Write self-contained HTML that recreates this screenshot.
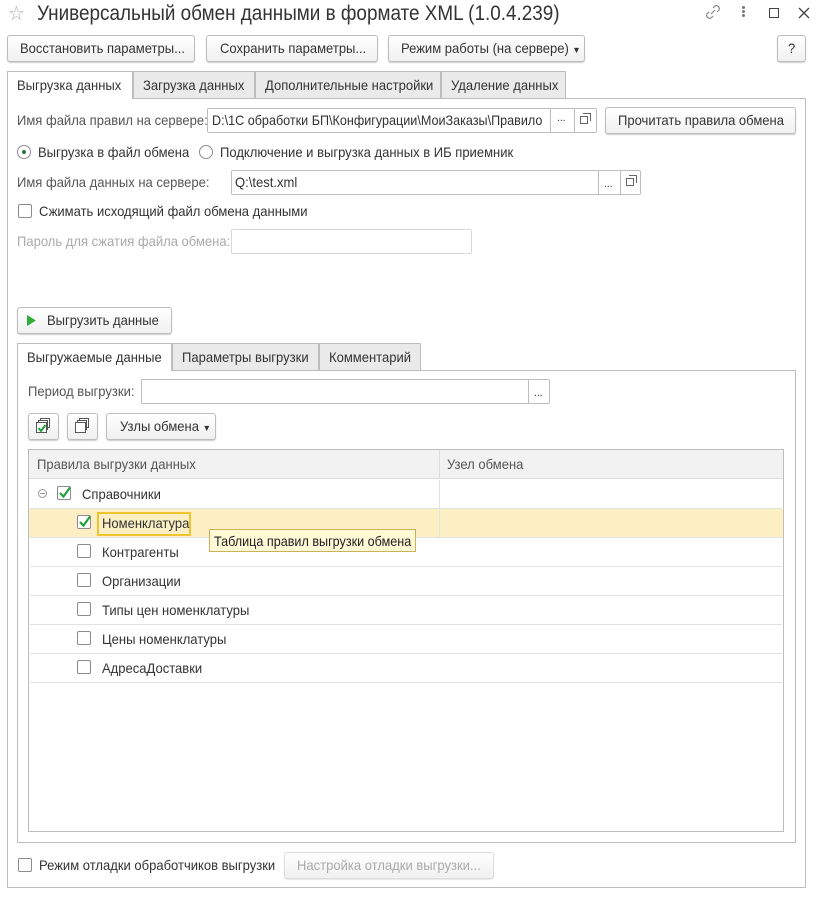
<!DOCTYPE html>
<html><head><meta charset="utf-8"><style>
*{box-sizing:border-box;margin:0;padding:0}
body{width:818px;height:897px;background:#fff;position:relative;overflow:hidden;font-family:"Liberation Sans",Arial,sans-serif;font-size:14px;color:#333}
.a{position:absolute}
.t{position:absolute;white-space:nowrap;transform:scaleX(0.93);transform-origin:left center;line-height:16px}
.btn{position:absolute;border:1px solid #bdbdbd;border-radius:3px;background:linear-gradient(#fff,#f0f0f0);box-shadow:0 1px 1px rgba(0,0,0,.2)}
.inp{position:absolute;border:1px solid #bdbdbd;background:#fff;border-radius:2px}
.tab{position:absolute;border:1px solid #bdbdbd;border-bottom:none;background:#eaeaea}
.cb{position:absolute;width:14px;height:14px;border:1px solid #8c8c8c;border-radius:2px;background:#fff}
.line{position:absolute;height:1px;background:#e2e2e2;left:30px;width:752px}
</style></head><body>
<div class="t" style="left:8px;top:3px;font-size:20px;line-height:22px;color:#aaa">☆</div>
<div class="t" style="left:37px;top:2px;font-size:21px;line-height:24px;color:#333;transform:scaleX(0.9)">Универсальный обмен данными в формате XML (1.0.4.239)</div>
<svg class="a" style="left:703px;top:3px" width="20" height="18" viewBox="0 0 20 18"><path d="M8 11 L12 7 M10 5 l2-2 a3 3 0 0 1 4 4 l-2 2 M10 13 l-2 2 a3 3 0 0 1 -4 -4 l2 -2" fill="none" stroke="#888" stroke-width="1.2"/></svg>
<div class="a" style="left:742px;top:6px;width:3px;height:3px;background:#777;border-radius:2px;box-shadow:0 4px 0 #777,0 8px 0 #777"></div>
<div class="a" style="left:769px;top:8px;width:10px;height:10px;border:1.5px solid #444"></div>
<svg class="a" style="left:797px;top:6px" width="14" height="14"><path d="M2 2L12 12M12 2L2 12" stroke="#444" stroke-width="1.3"/></svg>

<div class="btn" style="left:7px;top:35px;width:188px;height:27px"></div><div class="t" style="left:20px;top:40px">Восстановить параметры...</div>
<div class="btn" style="left:206px;top:35px;width:172px;height:27px"></div><div class="t" style="left:220px;top:40px">Сохранить параметры...</div>
<div class="btn" style="left:388px;top:35px;width:197px;height:27px"></div><div class="t" style="left:401px;top:40px">Режим работы (на сервере) <span style="font-size:9px">▼</span></div>
<div class="btn" style="left:777px;top:35px;width:29px;height:27px"></div><div class="t" style="left:788px;top:40px">?</div>

<div class="a" style="left:7px;top:98px;width:799px;height:790px;border:1px solid #bdbdbd"></div>
<div class="tab" style="left:7px;top:71px;width:126px;height:28px;background:#fff"></div><div class="t" style="left:17px;top:77px">Выгрузка данных</div>
<div class="tab" style="left:133px;top:71px;width:122px;height:27px"></div><div class="t" style="left:143px;top:77px">Загрузка данных</div>
<div class="tab" style="left:255px;top:71px;width:186px;height:27px"></div><div class="t" style="left:265px;top:77px">Дополнительные настройки</div>
<div class="tab" style="left:441px;top:71px;width:125px;height:27px"></div><div class="t" style="left:451px;top:77px">Удаление данных</div>

<div class="t" style="left:17px;top:112px;color:#555">Имя файла правил на сервере:</div>
<div class="inp" style="left:207px;top:108px;width:390px;height:25px"></div>
<div class="t" style="left:212px;top:112px;transform:scaleX(0.9)">D:\1С обработки БП\Конфигурации\МоиЗаказы\Правило</div>
<div class="a" style="left:548px;top:109px;width:48px;height:23px;background:#fff"></div>
<div class="a" style="left:550px;top:108px;width:1px;height:25px;background:#bdbdbd"></div><div class="t" style="left:557px;top:110px;font-size:11px">...</div>
<div class="a" style="left:574px;top:108px;width:1px;height:25px;background:#bdbdbd"></div>
<div class="a" style="left:580px;top:116px;width:8px;height:8px;border:1px solid #666;background:#fff"></div><div class="a" style="left:583px;top:113px;width:8px;height:8px;border:1px solid #666;border-left:none;border-bottom:none"></div>
<div class="btn" style="left:605px;top:107px;width:191px;height:27px"></div><div class="t" style="left:618px;top:112px">Прочитать правила обмена</div>

<div class="a" style="left:17px;top:145px;width:14px;height:14px;border:1px solid #8c8c8c;border-radius:50%"></div><div class="a" style="left:22px;top:150px;width:4px;height:4px;background:#1e7a3c;border-radius:50%"></div>
<div class="t" style="left:38px;top:144px">Выгрузка в файл обмена</div>
<div class="a" style="left:199px;top:145px;width:14px;height:14px;border:1px solid #8c8c8c;border-radius:50%"></div>
<div class="t" style="left:220px;top:144px">Подключение и выгрузка данных в ИБ приемник</div>

<div class="t" style="left:17px;top:174px;color:#555">Имя файла данных на сервере:</div>
<div class="inp" style="left:231px;top:170px;width:410px;height:25px"></div>
<div class="t" style="left:235px;top:174px">Q:\test.xml</div>
<div class="a" style="left:598px;top:170px;width:1px;height:25px;background:#bdbdbd"></div><div class="t" style="left:604px;top:176px;font-size:11px">...</div>
<div class="a" style="left:620px;top:170px;width:1px;height:25px;background:#bdbdbd"></div>
<div class="a" style="left:626px;top:178px;width:8px;height:8px;border:1px solid #666;background:#fff"></div><div class="a" style="left:629px;top:175px;width:8px;height:8px;border:1px solid #666;border-left:none;border-bottom:none"></div>

<div class="cb" style="left:18px;top:204px"></div><div class="t" style="left:39px;top:203px">Сжимать исходящий файл обмена данными</div>
<div class="t" style="left:17px;top:233px;color:#aaa">Пароль для сжатия файла обмена:</div>
<div class="inp" style="left:231px;top:229px;width:241px;height:25px;border-color:#d8d8d8"></div>

<div class="btn" style="left:17px;top:307px;width:155px;height:27px"></div>
<svg class="a" style="left:27px;top:315px" width="10" height="11"><path d="M0 0L9 5.5L0 11Z" fill="#2fae3a"/></svg>
<div class="t" style="left:47px;top:312px">Выгрузить данные</div>

<div class="a" style="left:17px;top:370px;width:779px;height:473px;border:1px solid #bdbdbd"></div>
<div class="tab" style="left:17px;top:343px;width:155px;height:28px;background:#fff"></div><div class="t" style="left:27px;top:349px">Выгружаемые данные</div>
<div class="tab" style="left:172px;top:343px;width:147px;height:27px"></div><div class="t" style="left:182px;top:349px">Параметры выгрузки</div>
<div class="tab" style="left:319px;top:343px;width:102px;height:27px"></div><div class="t" style="left:329px;top:349px">Комментарий</div>

<div class="t" style="left:28px;top:383px;color:#555">Период выгрузки:</div>
<div class="inp" style="left:141px;top:379px;width:409px;height:25px"></div>
<div class="a" style="left:528px;top:379px;width:1px;height:25px;background:#bdbdbd"></div><div class="t" style="left:534px;top:385px;font-size:11px">...</div>

<div class="btn" style="left:28px;top:413px;width:31px;height:27px"></div>
<div class="a" style="left:40px;top:418px;width:10px;height:10px;border:1px solid #555;background:#fff"></div>
<div class="a" style="left:38px;top:420px;width:10px;height:10px;border:1px solid #555;background:#fff"></div>
<div class="a" style="left:36px;top:422px;width:11px;height:11px;border:1px solid #555;background:#fff"></div>
<svg class="a" style="left:37px;top:423px" width="10" height="10"><path d="M1.5 5L4 8L8.5 2" fill="none" stroke="#1fa33a" stroke-width="2"/></svg>
<div class="btn" style="left:67px;top:413px;width:31px;height:27px"></div>
<div class="a" style="left:79px;top:418px;width:10px;height:10px;border:1px solid #555;background:#fff"></div>
<div class="a" style="left:77px;top:420px;width:10px;height:10px;border:1px solid #555;background:#fff"></div>
<div class="a" style="left:75px;top:422px;width:11px;height:11px;border:1px solid #555;background:#fff"></div>
<div class="btn" style="left:106px;top:413px;width:110px;height:27px"></div><div class="t" style="left:120px;top:418px">Узлы обмена <span style="font-size:9px">▼</span></div>

<div class="a" style="left:28px;top:449px;width:756px;height:383px;border:1px solid #bdbdbd"></div>
<div class="a" style="left:29px;top:450px;width:754px;height:29px;background:#f2f2f2;border-bottom:1px solid #ddd"></div>
<div class="a" style="left:439px;top:450px;width:1px;height:29px;background:#ddd"></div>
<div class="t" style="left:37px;top:456px;color:#555">Правила выгрузки данных</div>
<div class="t" style="left:447px;top:456px;color:#555">Узел обмена</div>

<div class="a" style="left:29px;top:509px;width:754px;height:29px;background:#fbefc3"></div>
<div class="a" style="left:439px;top:480px;width:1px;height:58px;background:#e2e2e2"></div>
<div class="line" style="top:508px"></div><div class="line" style="top:537px"></div><div class="line" style="top:566px"></div><div class="line" style="top:595px"></div><div class="line" style="top:624px"></div><div class="line" style="top:653px"></div><div class="line" style="top:682px"></div>

<div class="a" style="left:38px;top:489px;width:9px;height:9px;border:1px solid #999;border-radius:50%"></div><div class="a" style="left:40px;top:493px;width:5px;height:1px;background:#999"></div>
<div class="cb" style="left:57px;top:486px"></div>
<svg class="a" style="left:58px;top:486px" width="14" height="13"><path d="M2 7L5.5 10.5L12 1.5" fill="none" stroke="#1fa33a" stroke-width="2.2"/></svg>
<div class="t" style="left:82px;top:486px">Справочники</div>

<div class="cb" style="left:77px;top:515px"></div>
<svg class="a" style="left:78px;top:515px" width="14" height="13"><path d="M2 7L5.5 10.5L12 1.5" fill="none" stroke="#1fa33a" stroke-width="2.2"/></svg>
<div class="a" style="left:97px;top:512px;width:94px;height:24px;border:2px solid #f0c330;background:#fbefc3"></div>
<div class="t" style="left:102px;top:515px">Номенклатура</div>

<div class="cb" style="left:77px;top:544px"></div><div class="t" style="left:102px;top:544px">Контрагенты</div>
<div class="cb" style="left:77px;top:573px"></div><div class="t" style="left:102px;top:573px">Организации</div>
<div class="cb" style="left:77px;top:602px"></div><div class="t" style="left:102px;top:602px">Типы цен номенклатуры</div>
<div class="cb" style="left:77px;top:631px"></div><div class="t" style="left:102px;top:631px">Цены номенклатуры</div>
<div class="cb" style="left:77px;top:660px"></div><div class="t" style="left:102px;top:660px">АдресаДоставки</div>

<div class="a" style="left:209px;top:529px;width:207px;height:23px;border:1px solid #c9b25a;background:#fff9d6"></div>
<div class="t" style="left:214px;top:533px;color:#222;transform:scaleX(0.9)">Таблица правил выгрузки обмена</div>

<div class="cb" style="left:18px;top:858px"></div><div class="t" style="left:39px;top:857px">Режим отладки обработчиков выгрузки</div>
<div class="btn" style="left:284px;top:852px;width:210px;height:27px;border-color:#ddd;box-shadow:0 1px 1px rgba(0,0,0,.1)"></div><div class="t" style="left:297px;top:857px;color:#aaa">Настройка отладки выгрузки...</div>
</body></html>
